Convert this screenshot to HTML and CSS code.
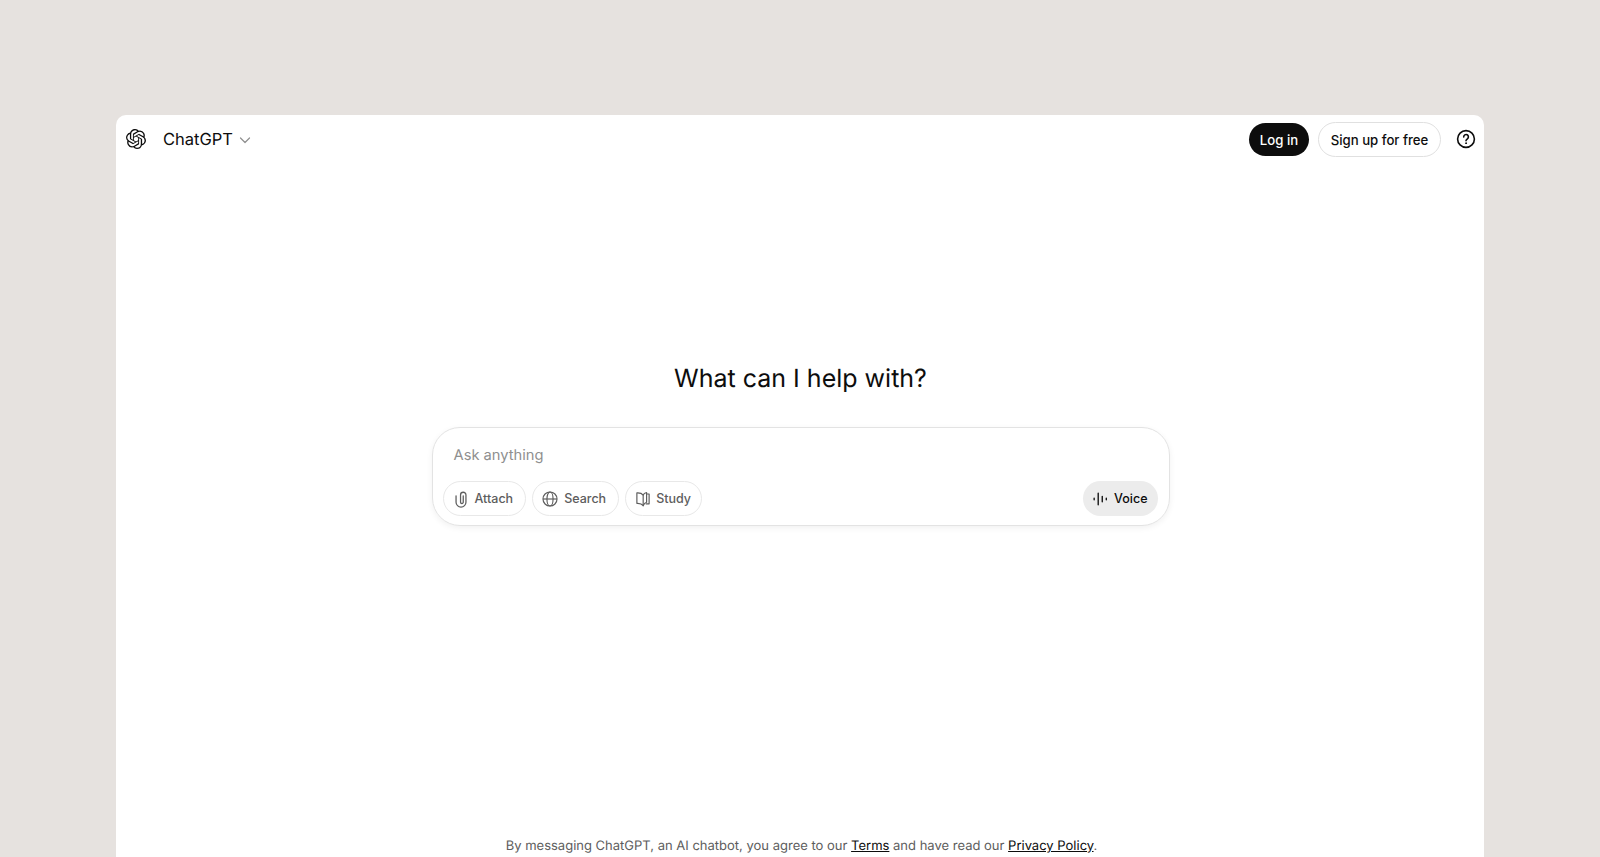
FILE: index.html
```html
<!DOCTYPE html>
<html lang="en">
<head>
    <meta charset="UTF-8">
    <meta name="viewport" content="width=device-width, initial-scale=1.0">
    <title>ChatGPT</title>
    <link rel="stylesheet" href="styles.css">
</head>
<body>
    <div class="window">
        <header class="topbar">
            <div class="brand">
                <svg class="logo" viewBox="0 0 24 24" fill="#0d0d0d"><path d="M22.2819 9.8211a5.9847 5.9847 0 0 0-.5157-4.9108 6.0462 6.0462 0 0 0-6.5098-2.9A6.0651 6.0651 0 0 0 4.9807 4.1818a5.9847 5.9847 0 0 0-3.9977 2.9 6.0462 6.0462 0 0 0 .7427 7.0966 5.98 5.98 0 0 0 .511 4.9107 6.051 6.051 0 0 0 6.5146 2.9001A5.9847 5.9847 0 0 0 13.2599 24a6.0557 6.0557 0 0 0 5.7718-4.2058 5.9894 5.9894 0 0 0 3.9977-2.9001 6.0557 6.0557 0 0 0-.7475-7.0729zm-9.022 12.6081a4.4755 4.4755 0 0 1-2.8764-1.0408l.1419-.0804 4.7783-2.7582a.7948.7948 0 0 0 .3927-.6813v-6.7369l2.02 1.1686a.071.071 0 0 1 .038.052v5.5826a4.504 4.504 0 0 1-4.4945 4.4944zm-9.6607-4.1254a4.4708 4.4708 0 0 1-.5346-3.0137l.142.0852 4.783 2.7582a.7712.7712 0 0 0 .7806 0l5.8428-3.3685v2.3324a.0804.0804 0 0 1-.0332.0615L9.74 19.9502a4.4992 4.4992 0 0 1-6.1408-1.6464zM2.3408 7.8956a4.485 4.485 0 0 1 2.3655-1.9728V11.6a.7664.7664 0 0 0 .3879.6765l5.8144 3.3543-2.0201 1.1685a.0757.0757 0 0 1-.071 0l-4.8303-2.7865A4.504 4.504 0 0 1 2.3408 7.872zm16.5963 3.8558L13.1038 8.364 15.1192 7.2a.0757.0757 0 0 1 .071 0l4.8303 2.7913a4.4944 4.4944 0 0 1-.6765 8.1042v-5.6772a.79.79 0 0 0-.407-.667zm2.0107-3.0231l-.142-.0852-4.7735-2.7818a.7759.7759 0 0 0-.7854 0L9.409 9.2297V6.8974a.0662.0662 0 0 1 .0284-.0615l4.8303-2.7866a4.4992 4.4992 0 0 1 6.6802 4.66zM8.3065 12.863l-2.02-1.1638a.0804.0804 0 0 1-.038-.0567V6.0742a4.4992 4.4992 0 0 1 7.3757-3.4537l-.142.0805L8.704 5.459a.7948.7948 0 0 0-.3927.6813zm1.0976-2.3654l2.602-1.4998 2.6069 1.4998v2.9994l-2.5974 1.4997-2.6067-1.4997Z"/></svg>
                <span class="brand-name">ChatGPT</span>
                <svg class="chevron" viewBox="0 0 12 12" fill="none" stroke="#8f8f8f" stroke-width="1.2" stroke-linecap="round" stroke-linejoin="round"><path d="M1.5 4l4.5 4.5L10.5 4"/></svg>
            </div>
            <div class="actions">
                <button class="btn btn-dark">Log in</button>
                <button class="btn btn-light">Sign up for free</button>
                <svg class="help" viewBox="0 0 20 20" fill="none" stroke="#0d0d0d" stroke-width="1.6" stroke-linecap="round"><circle cx="10" cy="10" r="8.4"/><path d="M7.7 7.9a2.35 2.35 0 1 1 3.7 1.9c-.8.55-1.4 1-1.4 1.9"/><circle cx="10" cy="14.2" r=".5" fill="#0d0d0d" stroke-width="1"/></svg>
            </div>
        </header>

        <main class="center">
            <h1 class="title">What can I help with?</h1>
            <div class="composer">
                <div class="prompt">Ask anything</div>
                <div class="tools">
                    <button class="chip">
                        <svg viewBox="0 0 20 20" fill="none" stroke="#5d5d5d" stroke-width="1.4" stroke-linecap="round"><path d="M4.500 6.500v7a5.500 5.500 0 0 0 11 0V5.500a3 3 0 0 0-6 0v8a1.500 1.500 0 0 0 3 0V6.500"/></svg>
                        Attach
                    </button>
                    <button class="chip">
                        <svg viewBox="0 0 20 20" fill="none" stroke="#5d5d5d" stroke-width="1.3"><circle cx="10" cy="10" r="7.800"/><ellipse cx="10" cy="10" rx="3.400" ry="7.800"/><path d="M2.200 10h15.600"/></svg>
                        Search
                    </button>
                    <button class="chip chip-study">
                        <svg viewBox="0 0 20 20" fill="none" stroke="#5d5d5d" stroke-width="1.3" stroke-linejoin="round" stroke-linecap="round"><path d="M10.200 5.600C9 4 6.800 3 3.200 3.200v11.600c3-.2 5.600.6 7 2.600z"/><path d="M10.200 5.600c.6-1.400 1.800-2.400 3.800-2.800v10.800c-1.800.4-3 1.800-3.800 3.800"/><path d="M14 4.400h2.800v11h-3.400"/></svg>
                        Study
                    </button>
                    <button class="chip voice">
                        <svg viewBox="0 0 20 20" fill="none" stroke="#0d0d0d" stroke-width="1.500" stroke-linecap="round"><path d="M3.500 9.200v1.600M8 3.500v13M12.500 7v6M17 9.200v1.600"/></svg>
                        Voice
                    </button>
                </div>
            </div>
        </main>

        <footer class="legal">
            By messaging ChatGPT, an AI chatbot, you agree to our <a href="#">Terms</a> and have read our <a href="#">Privacy Policy</a>.
        </footer>
    </div>
</body>
</html>
```

FILE: styles.css
```css
* {
    box-sizing: border-box;
}

html, body {
    height: 100%;
}

body {
    margin: 0;
    padding: 115px 116px 0;
    overflow: hidden;
    background-color: #e6e2df;
    color: #0d0d0d;
    font-family: 'Inter', 'Liberation Sans', sans-serif;
    text-rendering: geometricPrecision;
}

.window {
    display: flex;
    flex-direction: column;
    height: 100%;
    background-color: #fff;
    border-radius: 10px 10px 0 0;
}

.topbar {
    display: flex;
    justify-content: space-between;
    align-items: center;
    padding: 6px 8px 0 10px;
}

.brand {
    display: flex;
    align-items: center;
}

.logo {
    width: 20px;
    height: 20px;
}

.brand-name {
    margin-left: 17px;
    font-size: 16.5px;
}

.chevron {
    width: 12px;
    height: 12px;
    margin-left: 6px;
    margin-top: 2px;
}

.actions {
    display: flex;
    align-items: center;
}

.btn {
    margin-top: 1px;
    border-radius: 17.5px;
    font-family: inherit;
    font-size: 13.2px;
    font-weight: 500;
}

.btn-dark {
    width: 60px;
    height: 33px;
    margin-right: 9px;
    border: none;
    background-color: #0d0d0d;
    color: #fff;
}

.btn-light {
    width: 123px;
    height: 35px;
    border: 1px solid #e0e0e0;
    background-color: #fff;
    color: #0d0d0d;
}

.help {
    width: 20px;
    height: 20px;
    margin-left: 15px;
}

.center {
    display: flex;
    flex: 1;
    flex-direction: column;
    align-items: center;
    padding: 204px 0 0 1px;
}

.title {
    margin: 0 0 30px;
    font-size: 25px;
    font-weight: 400;
    line-height: 36px;
}

.composer {
    width: 738px;
    height: 99px;
    padding: 0 11px 0 10px;
    border: 1px solid #e3e3e3;
    border-radius: 28px;
    box-shadow: 0 2px 6px rgba(0, 0, 0, 0.06);
}

.prompt {
    height: 53px;
    padding-left: 11px;
    color: #8f8f8f;
    font-size: 14.7px;
    line-height: 54px;
}

.tools {
    display: flex;
    gap: 6px;
}

.chip {
    display: flex;
    align-items: center;
    gap: 5px;
    height: 35px;
    padding: 0 12px 0 8px;
    border: 1px solid #e8e8e8;
    border-radius: 18px;
    background-color: #fff;
    color: #5d5d5d;
    font-family: inherit;
    font-size: 12.5px;
    font-weight: 500;
}

.chip svg {
    width: 18px;
    height: 18px;
}

.chip-study {
    gap: 4px;
    padding-right: 10px;
}

.voice {
    margin-left: auto;
    gap: 5px;
    padding: 0 10px 0 8px;
    border: none;
    background-color: #ececec;
    color: #0d0d0d;
}

.legal {
    height: 24px;
    padding: 1px 0 0 3px;
    color: #5d5d5d;
    font-size: 13px;
    line-height: 24px;
    text-align: center;
}

.legal a {
    color: #0d0d0d;
}
```
